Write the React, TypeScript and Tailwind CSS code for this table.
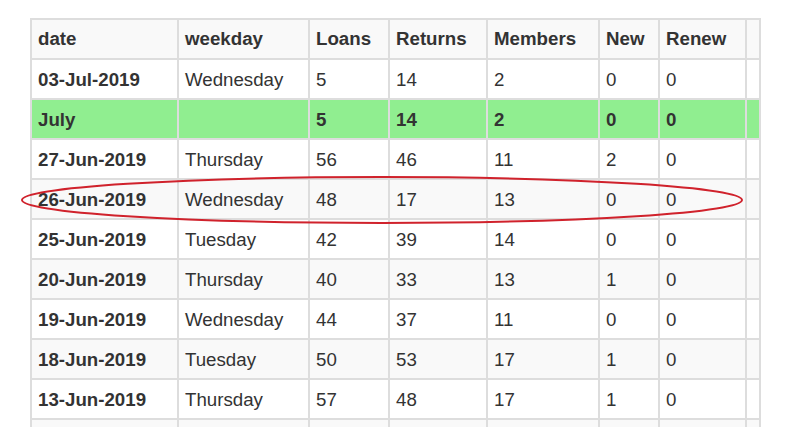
const headers = ['date', 'weekday', 'Loans', 'Returns', 'Members', 'New', 'Renew', ''];

const widths = ['w-[147px]', 'w-[131px]', 'w-[80px]', 'w-[98px]', 'w-[112px]', 'w-[60px]', 'w-[87px]', 'w-[14px]'];

type Row = { cells: string[]; kind: 'plain' | 'striped' | 'total' };

const rows: Row[] = [
  { cells: ['03-Jul-2019', 'Wednesday', '5', '14', '2', '0', '0', ''], kind: 'plain' },
  { cells: ['July', '', '5', '14', '2', '0', '0', ''], kind: 'total' },
  { cells: ['27-Jun-2019', 'Thursday', '56', '46', '11', '2', '0', ''], kind: 'plain' },
  { cells: ['26-Jun-2019', 'Wednesday', '48', '17', '13', '0', '0', ''], kind: 'striped' },
  { cells: ['25-Jun-2019', 'Tuesday', '42', '39', '14', '0', '0', ''], kind: 'plain' },
  { cells: ['20-Jun-2019', 'Thursday', '40', '33', '13', '1', '0', ''], kind: 'striped' },
  { cells: ['19-Jun-2019', 'Wednesday', '44', '37', '11', '0', '0', ''], kind: 'plain' },
  { cells: ['18-Jun-2019', 'Tuesday', '50', '53', '17', '1', '0', ''], kind: 'striped' },
  { cells: ['13-Jun-2019', 'Thursday', '57', '48', '17', '1', '0', ''], kind: 'plain' },
  // next row is cut off by the bottom edge, only its borders show
  { cells: ['', '', '', '', '', '', '', ''], kind: 'striped' },
];

const rowBg = {
  plain: 'bg-white',
  striped: 'bg-[#f9f9f9]',
  total: 'bg-[#90ee90] font-bold',
};

export default function App() {
  return (
    <div className="relative w-[785px] h-[427px] overflow-hidden bg-white pt-[18px] pl-[30px] font-['Liberation_Sans',Arial,sans-serif] text-[18.7px] text-[#333]">
      <table className="table-fixed border-separate border-spacing-0 border-l-2 border-t-2 border-[#ddd]">
        <thead>
          <tr className="bg-[#f9f9f9] font-bold">
            {headers.map((h, i) => (
              <th
                key={i}
                className={`${widths[i]} border-r-2 border-b-2 border-[#ddd] px-[6px] py-0 text-left leading-[38px] whitespace-nowrap`}
              >
                {h}
              </th>
            ))}
          </tr>
        </thead>
        <tbody>
          {rows.map((r, ri) => (
            <tr key={ri} className={rowBg[r.kind]}>
              {r.cells.map((c, ci) => (
                <td
                  key={ci}
                  className={`h-[40px] border-r-2 border-b-2 border-[#ddd] px-[6px] pt-[1px] pb-0 leading-[37px] whitespace-nowrap ${ci === 0 ? 'font-bold' : ''}`}
                >
                  {c}
                </td>
              ))}
            </tr>
          ))}
        </tbody>
      </table>

      {/* hand-drawn highlight round the 26-Jun row */}
      <svg className="pointer-events-none absolute left-0 top-0" width="785" height="427" viewBox="0 0 785 427">
        <ellipse cx="382" cy="200" rx="360" ry="23" fill="none" stroke="#d0222c" strokeWidth="2" />
      </svg>
    </div>
  );
}
